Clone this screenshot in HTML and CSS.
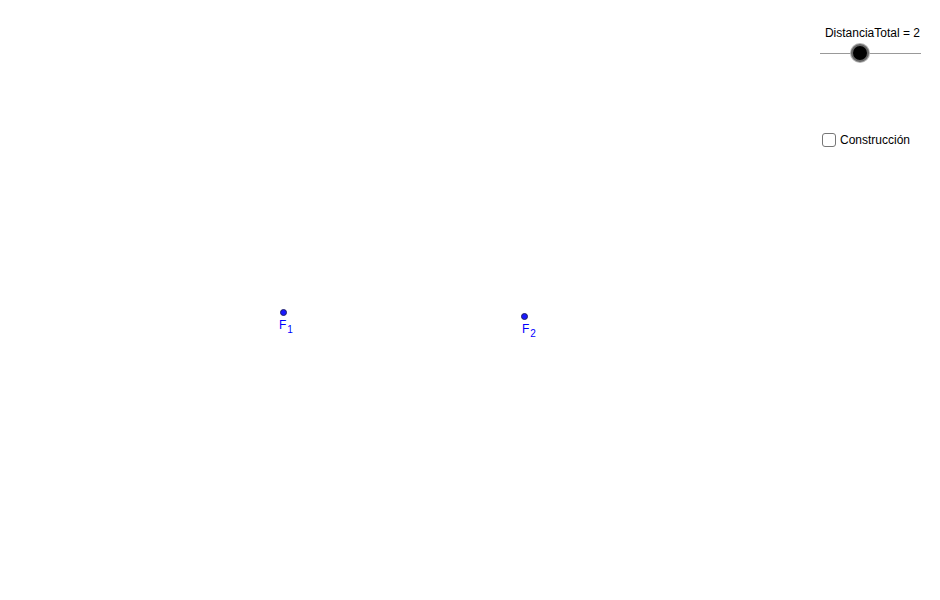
FILE: index.html
```html
<!DOCTYPE html>
<html>
<head>
<meta charset="utf-8">
<link rel="stylesheet" href="styles.css">
</head>
<body>
<div class="canvas">
  <div class="slider">
    <div class="slider-label">DistanciaTotal = 2</div>
    <div class="track"><span class="knob"></span></div>
  </div>
  <label class="check"><span class="box"></span><span class="check-text">Construcción</span></label>
  <div class="point p1"><span class="dot"></span><span class="plabel">F<sub>1</sub></span></div>
  <div class="point p2"><span class="dot"></span><span class="plabel">F<sub>2</sub></span></div>
</div>
</body>
</html>
```
FILE: styles.css
```css
html, body { margin: 0; padding: 0; background: #fff; }
body { font-family: "Liberation Sans", Arial, sans-serif; }
.canvas { position: relative; width: 940px; height: 600px; overflow: hidden; background: #fff; }
.slider { position: absolute; left: 820px; top: 26px; width: 101px; }
.slider-label { font-size: 12px; color: #000; text-align: right; line-height: 14px; padding-right: 1px; }
.track { position: relative; height: 1px; background: #999; margin-top: 13px; }
.knob { position: absolute; left: 31px; top: -9px; width: 14px; height: 14px; border-radius: 50%; background: #000; border: 2px solid #666; box-shadow: 0 0 0 1px #b0b0b0; box-sizing: content-box; }
.check { position: absolute; left: 822px; top: 133px; display: flex; align-items: center; gap: 4px; }
.box { width: 12px; height: 12px; border: 1px solid #777; border-radius: 3px; background: #fff; }
.check-text { font-size: 12px; color: #000; line-height: 14px; }
.point { position: absolute; width: 0; height: 0; }
.p1 { left: 283px; top: 312px; }
.p2 { left: 524px; top: 316px; }
.dot { position: absolute; left: -3.5px; top: -3.5px; width: 5px; height: 5px; border-radius: 50%; background: #1a1aff; border: 1px solid #222266; }
.plabel { position: absolute; left: -4px; top: 6px; font-size: 12px; line-height: 14px; color: #0000ff; white-space: nowrap; }
.p2 .plabel { left: -2px; }
.plabel sub { font-size: 10px; vertical-align: -4px; line-height: 0; margin-left: 1px; }
```
